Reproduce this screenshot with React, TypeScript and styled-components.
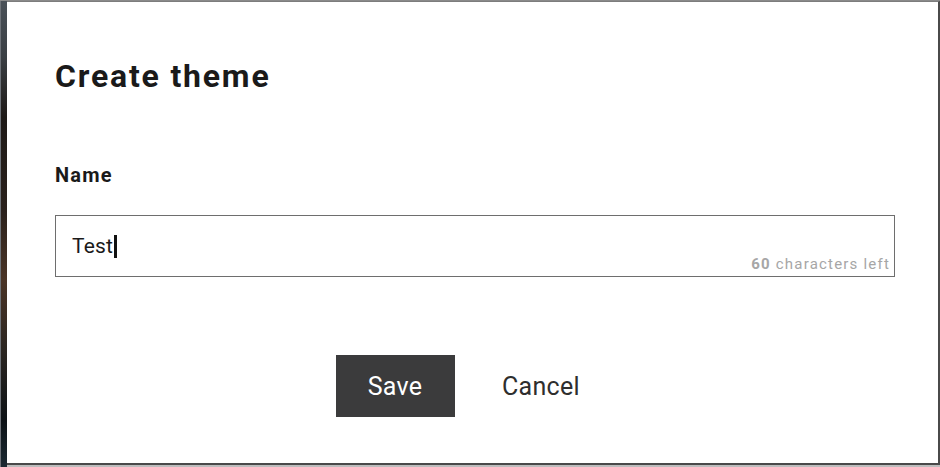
import React from "react";
import styled, { createGlobalStyle } from "styled-components";

const Global = createGlobalStyle`
  html, body { margin: 0; padding: 0; background: #ffffff; }
  body { font-family: Roboto, "Liberation Sans", sans-serif; }
  * { box-sizing: border-box; }
`;

const Frame = styled.div`
  width: 940px;
  height: 467px;
  display: flex;
  background: #bdbdbd;
  border-top: 1px solid #8a8a8a;
`;

const Backdrop = styled.div`
  width: 7px;
  border-left: 1px solid #6d7278;
  background: linear-gradient(
    180deg,
    #4a5158 0%,
    #3a3f44 12%,
    #1e1a17 25%,
    #2a211c 45%,
    #4a3426 60%,
    #2b2621 75%,
    #0d1216 90%,
    #1b2a33 100%
  );
`;

const Dialog = styled.section`
  flex: 1;
  display: flex;
  flex-direction: column;
  background: #ffffff;
  border-top: 1px solid #7d7d7d;
  border-right: 2px solid #4a4a4a;
  border-bottom: 2px solid #4a4a4a;
  margin-bottom: 2px;
  padding: 56px 43px 0 48px;
`;

const Title = styled.h1`
  margin: 0;
  font-size: 32px;
  line-height: 36px;
  font-weight: 700;
  letter-spacing: 1.8px;
  color: #1a1a1a;
`;

const Label = styled.label`
  margin-top: 70px;
  font-size: 20px;
  line-height: 22px;
  font-weight: 700;
  letter-spacing: 1.2px;
  color: #1a1a1a;
`;

const Field = styled.div`
  position: relative;
  margin-top: 29px;
  height: 62px;
  border: 1px solid #6e6e6e;
  display: flex;
  align-items: center;
  padding: 0 16px;
`;

const Value = styled.span`
  font-size: 21px;
  color: #1a1a1a;
  letter-spacing: 0.2px;
  margin-top: -1px;
`;

const Caret = styled.span`
  display: inline-block;
  width: 2.5px;
  height: 23px;
  background: #111;
  margin-left: 1px;
  vertical-align: -5px;
`;

const Counter = styled.span`
  position: absolute;
  right: 4px;
  bottom: 3px;
  font-size: 15px;
  letter-spacing: 1.2px;
  color: #a6a6a6;
  b { font-weight: 700; }
`;

const Actions = styled.div`
  margin-top: 78px;
  display: flex;
  justify-content: center;
  gap: 27px;
  padding-right: 14px;
`;

const Button = styled.button<{ $primary?: boolean }>`
  width: 119px;
  height: 62px;
  border: none;
  font-family: Roboto, "Liberation Sans", sans-serif;
  font-size: 25px;
  letter-spacing: 0.3px;
  cursor: pointer;
  background: ${(p) => (p.$primary ? "#3b3b3c" : "transparent")};
  color: ${(p) => (p.$primary ? "#ffffff" : "#2e2e2e")};
`;

export default function App() {
  return (
    <>
      <Global />
      <Frame>
        <Backdrop />
        <Dialog>
          <Title>Create theme</Title>
          <Label>Name</Label>
          <Field>
            <Value>
              Test
              <Caret />
            </Value>
            <Counter>
              <b>60</b> characters left
            </Counter>
          </Field>
          <Actions>
            <Button $primary>Save</Button>
            <Button>Cancel</Button>
          </Actions>
        </Dialog>
      </Frame>
    </>
  );
}
